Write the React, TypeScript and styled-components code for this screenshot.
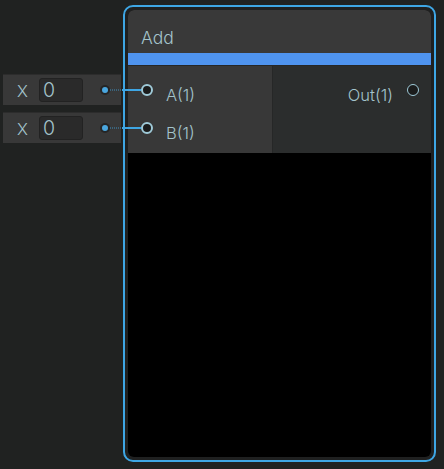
import React from "react";
import styled, { createGlobalStyle } from "styled-components";

const Global = createGlobalStyle`
  html, body { margin: 0; padding: 0; background: #202221; }
  body { font-family: Inter, "Noto Sans", "DejaVu Sans", sans-serif; font-weight: 300; }
`;

const Canvas = styled.div`
  position: relative;
  width: 444px;
  height: 469px;
  overflow: hidden;
  background: #202221;
`;

const FieldStack = styled.div`
  position: absolute;
  left: 3px;
  top: 74px;
  display: flex;
  flex-direction: column;
  gap: 7px;
`;

const FieldRow = styled.div`
  box-sizing: border-box;
  width: 118px;
  height: 31px;
  background: #383838;
  border-top: 1px solid #2c2c2c;
  display: flex;
  align-items: center;
  padding-left: 14px;
`;

const FieldLabel = styled.span`
  width: 22px;
  font-size: 16.5px;
  line-height: 18px;
  padding-top: 2px;
  color: #a3c3cb;
`;

const FieldInput = styled.div`
  box-sizing: border-box;
  width: 44px;
  height: 24px;
  background: #2a2a2a;
  border: 1px solid #222222;
  border-radius: 3px;
  padding-left: 3px;
  font-size: 19.5px;
  line-height: 22px;
  color: #a3c3cb;
`;

const Dot = styled.div`
  box-sizing: border-box;
  width: 10px;
  height: 10px;
  margin-left: 17px;
  border-radius: 50%;
  background: #252525;
  display: flex;
  align-items: center;
  justify-content: center;
  &::after {
    content: "";
    width: 6px;
    height: 6px;
    border-radius: 50%;
    background: #4aa6de;
  }
`;

const Node = styled.div`
  position: absolute;
  left: 123px;
  top: 5px;
  box-sizing: border-box;
  width: 313px;
  height: 457px;
  border: 2px solid #3ea6e4;
  border-radius: 10px;
  padding: 3px;
  background: #1f2020;
`;

const Body = styled.div`
  height: 100%;
  border-radius: 6px;
  overflow: hidden;
  background: #000;
  display: flex;
  flex-direction: column;
`;

const Title = styled.div`
  box-sizing: border-box;
  height: 43px;
  padding: 18px 0 0 13px;
  font-size: 17.5px;
  line-height: 20px;
  color: #a3c3cb;
  background: #393939;
`;

const Accent = styled.div`
  height: 12px;
  background: #4f94ef;
`;

const Ports = styled.div`
  display: flex;
  height: 88px;
  border-top: 1px solid #262727;
  box-sizing: border-box;
`;

const InputColumn = styled.div`
  box-sizing: border-box;
  width: 144px;
  background: #383838;
  padding-top: 5px;
  display: flex;
  flex-direction: column;
`;

const OutputColumn = styled.div`
  box-sizing: border-box;
  flex: 1;
  background: #2b2d2d;
  border-left: 1px solid #262727;
  padding-top: 5px;
  display: flex;
  flex-direction: column;
  align-items: flex-end;
`;

const PortRow = styled.div<{ $out?: boolean }>`
  height: 38px;
  display: flex;
  align-items: center;
  flex-direction: ${(p) => (p.$out ? "row-reverse" : "row")};
  gap: ${(p) => (p.$out ? "14px" : "13px")};
  padding: ${(p) => (p.$out ? "0 12px 0 0" : "0 0 0 13px")};
`;

const PortCircle = styled.div<{ $thin?: boolean }>`
  box-sizing: border-box;
  width: 12px;
  height: 12px;
  border-radius: 50%;
  border: ${(p) => (p.$thin ? "1.7px" : "2px")} solid #9fcad8;
  background: #1b1c1c;
`;

const PortLabel = styled.span`
  font-size: 16.5px;
  line-height: 18px;
  padding-top: 9px;
  color: #a3c3cb;
`;

const Wires = styled.svg`
  position: absolute;
  left: 0;
  top: 0;
  pointer-events: none;
`;

export default function App() {
  return (
    <>
      <Global />
      <Canvas>
        <Node>
          <Body>
            <Title>Add</Title>
            <Accent />
            <Ports>
              <InputColumn>
                <PortRow>
                  <PortCircle />
                  <PortLabel>A(1)</PortLabel>
                </PortRow>
                <PortRow>
                  <PortCircle />
                  <PortLabel>B(1)</PortLabel>
                </PortRow>
              </InputColumn>
              <OutputColumn>
                <PortRow $out>
                  <PortCircle $thin />
                  <PortLabel>Out(1)</PortLabel>
                </PortRow>
              </OutputColumn>
            </Ports>
          </Body>
        </Node>
        <FieldStack>
          {[0, 1].map((i) => (
            <FieldRow key={i}>
              <FieldLabel>X</FieldLabel>
              <FieldInput>0</FieldInput>
              <Dot />
            </FieldRow>
          ))}
        </FieldStack>
        <Wires width="444" height="469">
          {[90, 128].map((y) => (
            <g key={y}>
              <line x1="110" y1={y} x2="122" y2={y} stroke="#3f8fbf" strokeWidth="1" strokeDasharray="1 1" />
              <line x1="122" y1={y} x2="141" y2={y} stroke="#3ea6e4" strokeWidth="2" />
            </g>
          ))}
        </Wires>
      </Canvas>
    </>
  );
}
